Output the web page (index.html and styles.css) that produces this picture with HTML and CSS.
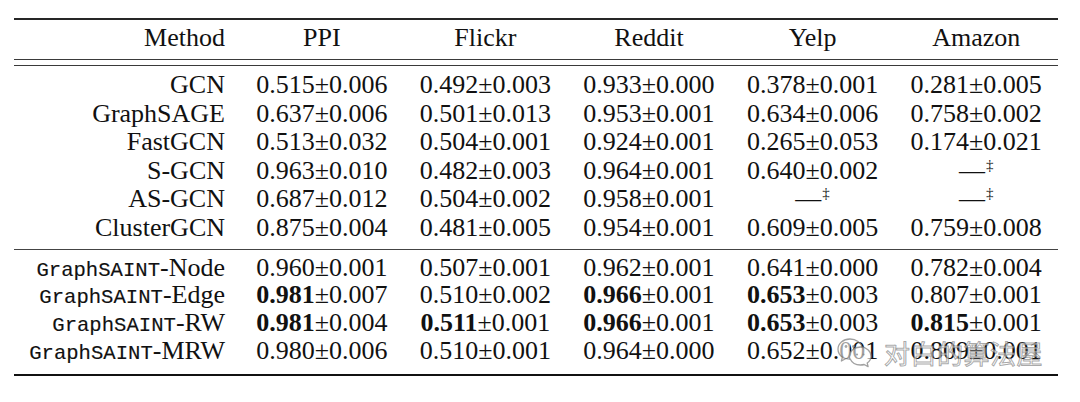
FILE: index.html
```html
<!DOCTYPE html>
<html lang="en">
<head>
<meta charset="utf-8">
<title>GraphSAINT results</title>
<link rel="stylesheet" href="styles.css">
</head>
<body>
<div class="page">
  <div class="tbl">
    <div class="rule-top"></div>
    <div class="row head">
      <div class="m">Method</div><div class="c">PPI</div><div class="c">Flickr</div><div class="c">Reddit</div><div class="c">Yelp</div><div class="c">Amazon</div>
    </div>
    <div class="double"></div>
    <div class="sec sec1">
      <div class="row"><div class="m">GCN</div><div class="c">0.515±0.006</div><div class="c">0.492±0.003</div><div class="c">0.933±0.000</div><div class="c">0.378±0.001</div><div class="c">0.281±0.005</div></div>
      <div class="row"><div class="m">GraphSAGE</div><div class="c">0.637±0.006</div><div class="c">0.501±0.013</div><div class="c">0.953±0.001</div><div class="c">0.634±0.006</div><div class="c">0.758±0.002</div></div>
      <div class="row"><div class="m">FastGCN</div><div class="c">0.513±0.032</div><div class="c">0.504±0.001</div><div class="c">0.924±0.001</div><div class="c">0.265±0.053</div><div class="c">0.174±0.021</div></div>
      <div class="row"><div class="m">S-GCN</div><div class="c">0.963±0.010</div><div class="c">0.482±0.003</div><div class="c">0.964±0.001</div><div class="c">0.640±0.002</div><div class="c">—<span class="dag">‡</span></div></div>
      <div class="row"><div class="m">AS-GCN</div><div class="c">0.687±0.012</div><div class="c">0.504±0.002</div><div class="c">0.958±0.001</div><div class="c">—<span class="dag">‡</span></div><div class="c">—<span class="dag">‡</span></div></div>
      <div class="row"><div class="m">ClusterGCN</div><div class="c">0.875±0.004</div><div class="c">0.481±0.005</div><div class="c">0.954±0.001</div><div class="c">0.609±0.005</div><div class="c">0.759±0.008</div></div>
    </div>
    <div class="mid"></div>
    <div class="sec sec2">
      <div class="row"><div class="m"><span class="mono">GraphSAINT</span>-Node</div><div class="c">0.960±0.001</div><div class="c">0.507±0.001</div><div class="c">0.962±0.001</div><div class="c">0.641±0.000</div><div class="c">0.782±0.004</div></div>
      <div class="row"><div class="m"><span class="mono">GraphSAINT</span>-Edge</div><div class="c"><b>0.981</b>±0.007</div><div class="c">0.510±0.002</div><div class="c"><b>0.966</b>±0.001</div><div class="c"><b>0.653</b>±0.003</div><div class="c">0.807±0.001</div></div>
      <div class="row"><div class="m"><span class="mono">GraphSAINT</span>-RW</div><div class="c"><b>0.981</b>±0.004</div><div class="c"><b>0.511</b>±0.001</div><div class="c"><b>0.966</b>±0.001</div><div class="c"><b>0.653</b>±0.003</div><div class="c"><b>0.815</b>±0.001</div></div>
      <div class="row"><div class="m"><span class="mono">GraphSAINT</span>-MRW</div><div class="c">0.980±0.006</div><div class="c">0.510±0.001</div><div class="c">0.964±0.000</div><div class="c">0.652±0.001</div><div class="c">0.809±0.001</div></div>
    </div>
    <div class="rule-bot"></div>
  </div>
  <div class="wm">
    <svg class="wm-icon" width="36" height="36" viewBox="0 0 36 36" aria-hidden="true">
      <path d="M14 4C7 4 2 8.6 2 14.2c0 3.2 1.7 6 4.4 7.9L5.4 26l4.6-2.5c1.3.4 2.6.6 4 .6" fill="rgba(255,255,255,0.6)" stroke="rgba(130,130,130,0.75)" stroke-width="1.3" stroke-linejoin="round"/>
      <path d="M14 24.1C13.6 23.2 13.4 22.2 13.4 21.2 13.4 16 18.4 12 24.4 12S35 16 35 21.2c0 2.8-1.5 5.2-3.8 6.8l.9 3.6-3.9-2.1c-1.1.3-2.300.5-3.8.5-4.6 0-8.6-2.4-10.2-5.9z" fill="rgba(255,255,255,0.6)" stroke="rgba(130,130,130,0.75)" stroke-width="1.3" stroke-linejoin="round"/>
      <path d="M14 4c6.2 0 11.2 3.7 12.1 8.4" fill="none" stroke="rgba(130,130,130,0.75)" stroke-width="1.3"/>
      <circle cx="10" cy="11.5" r="1.4" fill="rgba(130,130,130,0.7)"/>
      <circle cx="17.5" cy="11.5" r="1.4" fill="rgba(130,130,130,0.7)"/>
      <circle cx="21" cy="19.5" r="1.1" fill="rgba(130,130,130,0.7)"/>
      <circle cx="27.5" cy="19.5" r="1.1" fill="rgba(130,130,130,0.7)"/>
    </svg>
    <span class="wm-text">对白的算法屋</span>
  </div>
</div>
</body>
</html>
```

FILE: styles.css
```css
html, body {
  margin: 0;
  background: #fff;
}
body {
  font-family: "Liberation Serif", "Times New Roman", serif;
  color: #111;
}
.page {
  position: relative;
  padding: 18px 0 0 14px;
  height: 384px;
}
.tbl {
  width: 1044px;
}
.rule-top {
  height: 2px;
  background: #262626;
}
.rule-bot {
  height: 2px;
  background: #111;
}
.double {
  height: 5px;
  border-top: 1px solid #3a3a3a;
  border-bottom: 1px solid #3a3a3a;
}
.mid {
  height: 1px;
  background: #444;
}
.row {
  display: grid;
  grid-template-columns: 226px repeat(5, 1fr);
  font-size: 26px;
  white-space: nowrap;
}
.head {
  padding: 3px 0 7px;
  line-height: 29px;
}
.sec1 {
  padding: 5px 0 6px;
}
.sec1 .row {
  line-height: 28.6px;
}
.sec2 {
  padding: 4px 0 9px;
}
.sec2 .row {
  line-height: 27.8px;
}
.m {
  text-align: right;
  padding-right: 15px;
}
.c {
  text-align: center;
}
.mono {
  font-family: "Liberation Mono", "Courier New", monospace;
  font-size: 20.6px;
  line-height: 1;
  -webkit-text-stroke: 0.15px #111;
}
b {
  font-weight: bold;
}
.dag {
  font-size: 15px;
  line-height: 0;
  vertical-align: 9px;
  margin-left: 1px;
}
.wm {
  position: absolute;
  left: 836px;
  top: 335px;
  display: flex;
  align-items: center;
  gap: 12px;
}
.wm-icon {
  display: block;
}
.wm-text {
  font-family: "Noto Sans CJK SC", sans-serif;
  font-size: 26px;
  line-height: 30px;
  letter-spacing: 0.5px;
  color: rgba(255, 255, 255, 0.55);
  -webkit-text-stroke: 1px rgba(120, 120, 120, 0.65);
}
```
